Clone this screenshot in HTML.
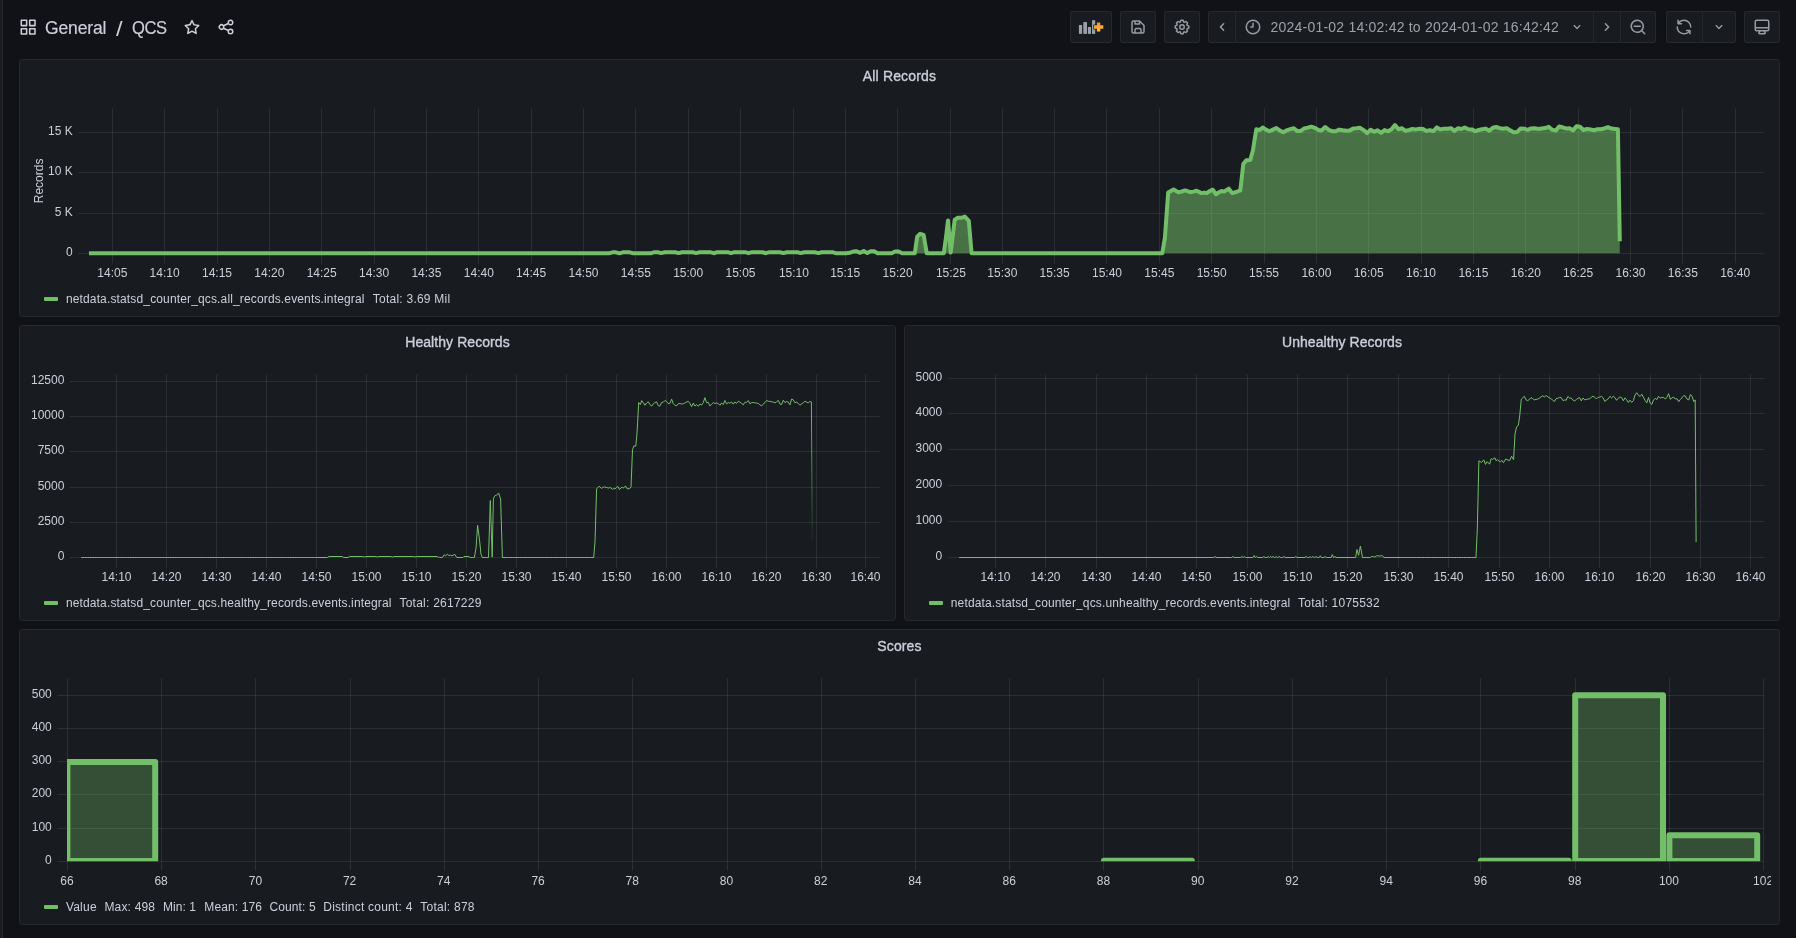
<!DOCTYPE html>
<html lang="en">
<head>
<meta charset="utf-8">
<title>QCS - Grafana</title>
<style>
*{box-sizing:border-box}
html,body{margin:0;padding:0}
body{width:1796px;height:938px;overflow:hidden;background:#111217;color:rgb(204,207,219);
 font-family:"Liberation Sans",Arial,sans-serif;font-size:14px;position:relative}
#app{position:absolute;left:0;top:0;width:1796px;height:938px;will-change:transform;transform:translateZ(0)}
.rail{position:absolute;left:0;top:0;width:3px;height:938px;background:#181b1f;border-right:1px solid #24262c}
.ic{position:absolute;display:block}
.crumb{position:absolute;left:45.2px;top:16.7px;-webkit-text-stroke:0.18px rgb(204,207,219);font-size:18px;line-height:22px;white-space:nowrap;color:rgb(204,207,219)}
.crumb span{display:inline-block}
.btn{position:absolute;top:11px;height:32px;background:#181b1f;border:1px solid #25272c;border-radius:2px}
.tr{position:absolute;left:1270.6px;top:16px;line-height:22px;font-size:14px;color:#9da1ab;white-space:nowrap}
.panel{position:absolute;background:#181b1f;border:1px solid #25272c;border-radius:3px;overflow:hidden}
.ptitle{position:absolute;left:0;right:0;top:6px;margin:0;text-align:center;font-size:14px;line-height:20px;font-weight:400;
 -webkit-text-stroke:0.35px rgb(204,207,219);color:rgb(204,207,219)}
.chart{position:absolute;left:-1px;top:-1px;display:block}
.ax{font-family:"Liberation Sans",Arial,sans-serif;font-size:12px;fill:rgb(204,207,219)}
.legend{position:absolute;left:0;height:16px;width:100%;font-size:12px;line-height:16px;white-space:nowrap;color:rgb(204,207,219)}
.li{position:absolute;top:0;display:block}
.fit{display:inline-block;white-space:nowrap}
.sw{position:absolute;top:6.5px;width:14px;height:4px;border-radius:1px;background:#73bf69}
</style>
</head>
<body>
<div id="app">
<div class="rail"></div>
<header>

<svg class="ic" style="left:18.75px;top:17.75px;width:18.3px;height:18.3px;color:rgb(204,207,219)" viewBox="0 0 24 24"><path fill="currentColor" d="M10,13H3a1,1,0,0,0-1,1v7a1,1,0,0,0,1,1h7a1,1,0,0,0,1-1V14A1,1,0,0,0,10,13ZM9,20H4V15H9ZM21,2H14a1,1,0,0,0-1,1v7a1,1,0,0,0,1,1h7a1,1,0,0,0,1-1V3A1,1,0,0,0,21,2ZM20,9H15V4h5Zm1,4H14a1,1,0,0,0-1,1v7a1,1,0,0,0,1,1h7a1,1,0,0,0,1-1V14A1,1,0,0,0,21,13Zm-1,7H15V15h5ZM10,2H3A1,1,0,0,0,2,3v7a1,1,0,0,0,1,1h7a1,1,0,0,0,1-1V3A1,1,0,0,0,10,2ZM9,9H4V4H9Z"/></svg>
<div class="crumb"><span class="fit" style="letter-spacing:-0.168px;transform:scaleX(0.975);transform-origin:0 50%;">General</span><span style="position:absolute;left:70.6px;top:1.5px;font-size:20.5px;-webkit-text-stroke:0;transform:scaleX(1.15);transform-origin:0 50%">/</span><span class="fit" style="letter-spacing:-0.469px;position:absolute;left:87.0px;top:0;transform:scaleX(0.92);transform-origin:0 50%;">QCS</span></div>
<svg class="ic" style="left:183.00px;top:18.20px;width:18px;height:18px;color:rgb(204,207,219)" viewBox="0 0 24 24"><path fill="currentColor" d="M22,9.67A1,1,0,0,0,21.14,9l-5.69-.83L12.9,3a1,1,0,0,0-1.8,0L8.55,8.16,2.86,9a1,1,0,0,0-.81.68,1,1,0,0,0,.25,1l4.13,4-1,5.68A1,1,0,0,0,6.9,21.44L12,18.77l5.1,2.67a.93.93,0,0,0,.46.12,1,1,0,0,0,.59-.19,1,1,0,0,0,.4-1l-1-5.68,4.13-4A1,1,0,0,0,22,9.67Zm-6.15,4a1,1,0,0,0-.29.88l.72,4.2-3.76-2a1.06,1.06,0,0,0-.94,0l-3.76,2,.72-4.2a1,1,0,0,0-.29-.88l-3-3,4.21-.61a1,1,0,0,0,.76-.55L12,5.7l1.88,3.82a1,1,0,0,0,.76.55l4.21.61Z"/></svg>
<svg class="ic" style="left:217.00px;top:18.20px;width:18px;height:18px;color:rgb(204,207,219)" viewBox="0 0 24 24"><path fill="currentColor" d="M18,14a4,4,0,0,0-3.08,1.48l-5.1-2.35a3.64,3.64,0,0,0,0-2.26l5.1-2.35A4,4,0,1,0,14,6a4.17,4.17,0,0,0,.07.71L8.79,9.14a4,4,0,1,0,0,5.72l5.28,2.43A4.17,4.17,0,0,0,14,18a4,4,0,1,0,4-4ZM18,4a2,2,0,1,1-2,2A2,2,0,0,1,18,4ZM6,14a2,2,0,1,1,2-2A2,2,0,0,1,6,14Zm12,6a2,2,0,1,1,2-2A2,2,0,0,1,18,20Z"/></svg>
<div class="btn" style="left:1070px;width:42px"></div>
<div class="btn" style="left:1120px;width:36px"></div>
<div class="btn" style="left:1164px;width:36px"></div>
<div class="btn" style="left:1208px;width:448px"></div>
<div class="btn" style="left:1666px;width:70px"></div>
<div class="btn" style="left:1744px;width:36px"></div>
<div style="position:absolute;left:1235px;top:12px;width:1px;height:30px;background:#25272c"></div>
<div style="position:absolute;left:1593px;top:12px;width:1px;height:30px;background:#25272c"></div>
<div style="position:absolute;left:1620px;top:12px;width:1px;height:30px;background:#25272c"></div>
<div style="position:absolute;left:1702px;top:12px;width:1px;height:30px;background:#25272c"></div>
<svg class="ic" style="left:1078px;top:18px;width:28px;height:18px" viewBox="0 0 28 18"><defs><linearGradient id="pg" x1="0" y1="0" x2="0" y2="1"><stop offset="0" stop-color="#f58b3b"/><stop offset="1" stop-color="#fbc52e"/></linearGradient></defs><rect x="0.9" y="7.0" width="3.2" height="8.9" fill="#9aa0aa"/><rect x="5.3" y="4.1" width="3.7" height="11.8" fill="#9aa0aa"/><rect x="9.9" y="9.0" width="3.1" height="6.9" fill="#9aa0aa"/><rect x="14.0" y="2.2" width="3.2" height="13.7" fill="#9aa0aa"/><path d="M18.9 4.4h3.4v2.9h3v3.4h-3v2.9h-3.4v-2.9h-3v-3.4h3z" fill="url(#pg)" stroke="#181b1f" stroke-width="1.4" paint-order="stroke" stroke-linejoin="round"/></svg>
<svg class="ic" style="left:1129.00px;top:18.00px;width:18px;height:18px;color:#969ba6" viewBox="0 0 24 24"><path fill="currentColor" d="M20.71,9.29l-6-6a1,1,0,0,0-.32-.21A1.09,1.09,0,0,0,14,3H6A3,3,0,0,0,3,6V18a3,3,0,0,0,3,3H18a3,3,0,0,0,3-3V10A1,1,0,0,0,20.71,9.29ZM9,5h4V7H9Zm6,14H9V16a1,1,0,0,1,1-1h4a1,1,0,0,1,1,1Zm4-1a1,1,0,0,1-1,1H17V16a3,3,0,0,0-3-3H10a3,3,0,0,0-3,3v3H6a1,1,0,0,1-1-1V6A1,1,0,0,1,6,5H7V8A1,1,0,0,0,8,9h6a1,1,0,0,0,1-1V6.41l4,4Z"/></svg>
<svg class="ic" style="left:1173.00px;top:18.00px;width:18px;height:18px;color:#969ba6" viewBox="0 0 24 24"><path fill="currentColor" d="M21.32,9.55l-1.89-.63.89-1.78A1,1,0,0,0,20.13,6L18,3.87a1,1,0,0,0-1.15-.19l-1.78.89-.63-1.89A1,1,0,0,0,13.5,2h-3a1,1,0,0,0-.95.68L8.92,4.57,7.14,3.68A1,1,0,0,0,6,3.87L3.87,6a1,1,0,0,0-.19,1.15l.89,1.78-1.89.63A1,1,0,0,0,2,10.5v3a1,1,0,0,0,.68.95l1.89.63-.89,1.78A1,1,0,0,0,3.87,18L6,20.13a1,1,0,0,0,1.15.19l1.78-.89.63,1.89a1,1,0,0,0,.95.68h3a1,1,0,0,0,.95-.68l.63-1.89,1.78.89A1,1,0,0,0,18,20.13L20.13,18a1,1,0,0,0,.19-1.15l-.89-1.78,1.89-.63A1,1,0,0,0,22,13.5v-3A1,1,0,0,0,21.32,9.55ZM20,12.78l-1.2.4A2,2,0,0,0,17.64,16l.57,1.14-1.1,1.1L16,17.64a2,2,0,0,0-2.79,1.16l-.4,1.2H11.22l-.4-1.2A2,2,0,0,0,8,17.64l-1.14.57-1.1-1.1L6.36,16A2,2,0,0,0,5.2,13.18L4,12.78V11.22l1.2-.4A2,2,0,0,0,6.36,8L5.79,6.89l1.1-1.1L8,6.36A2,2,0,0,0,10.82,5.2l.4-1.2h1.56l.4,1.2A2,2,0,0,0,16,6.36l1.14-.57,1.1,1.1L17.64,8a2,2,0,0,0,1.16,2.79l1.2.4ZM12,8a4,4,0,1,0,4,4A4,4,0,0,0,12,8Zm0,6a2,2,0,1,1,2-2A2,2,0,0,1,12,14Z"/></svg>
<svg class="ic" style="left:1213.30px;top:18.00px;width:18px;height:18px;color:#969ba6" viewBox="0 0 24 24"><path fill="currentColor" d="M11.29,12l3.54-3.54a1,1,0,0,0,0-1.41,1,1,0,0,0-1.42,0L9.17,11.29a1,1,0,0,0,0,1.42L13.41,17a1,1,0,0,0,.71.29,1,1,0,0,0,.71-.29,1,1,0,0,0,0-1.41Z"/></svg>
<svg class="ic" style="left:1243.90px;top:17.80px;width:18px;height:18px;color:#969ba6" viewBox="0 0 24 24"><path fill="currentColor" d="M12,2A10,10,0,1,0,22,12,10.01114,10.01114,0,0,0,12,2Zm0,18a8,8,0,1,1,8-8A8.00917,8.00917,0,0,1,12,20ZM12,6a.99974.99974,0,0,0-1,1v4H9a1,1,0,0,0,0,2h3a.99974.99974,0,0,0,1-1V7A.99974.99974,0,0,0,12,6Z"/></svg>
<div class="tr"><span class="fit" style="letter-spacing:0.213px;">2024-01-02 14:02:42 to 2024-01-02 16:42:42</span></div>
<svg class="ic" style="left:1569.00px;top:19.00px;width:16px;height:16px;color:#969ba6" viewBox="0 0 24 24"><path fill="currentColor" d="M17,9.17a1,1,0,0,0-1.41,0L12,12.71,8.46,9.17a1,1,0,0,0-1.41,0,1,1,0,0,0,0,1.42l4.24,4.24a1,1,0,0,0,1.42,0L17,10.59A1,1,0,0,0,17,9.17Z"/></svg>
<svg class="ic" style="left:1597.70px;top:18.00px;width:18px;height:18px;color:#969ba6" viewBox="0 0 24 24"><path fill="currentColor" d="M14.83,11.29,10.59,7.05a1,1,0,0,0-1.42,0,1,1,0,0,0,0,1.41L12.71,12,9.17,15.54a1,1,0,0,0,0,1.41,1,1,0,0,0,.71.29,1,1,0,0,0,.71-.29l4.24-4.24A1,1,0,0,0,14.83,11.29Z"/></svg>
<svg class="ic" style="left:1628.80px;top:18.00px;width:18px;height:18px;color:#969ba6" viewBox="0 0 24 24"><path fill="currentColor" d="M21.71,20.29,18,16.61A9,9,0,1,0,16.61,18l3.68,3.68a1,1,0,0,0,1.42,0A1,1,0,0,0,21.71,20.29ZM11,18a7,7,0,1,1,7-7A7,7,0,0,1,11,18Zm4-8H7a1,1,0,0,0,0,2h8a1,1,0,0,0,0-2Z"/></svg>
<svg class="ic" style="left:1675.00px;top:18.00px;width:18px;height:18px;color:#969ba6" viewBox="0 0 24 24"><path fill="currentColor" d="M19.91,15.51H15.38a1,1,0,0,0,0,2h2.4A8,8,0,0,1,4,12a1,1,0,0,0-2,0,10,10,0,0,0,16.88,7.23V21a1,1,0,0,0,2,0V16.5A1,1,0,0,0,19.91,15.51ZM12,2A10,10,0,0,0,5.12,4.77V3a1,1,0,0,0-2,0V7.5a1,1,0,0,0,1,1h4.5a1,1,0,0,0,0-2H6.22A8,8,0,0,1,20,12a1,1,0,0,0,2,0A10,10,0,0,0,12,2Z"/></svg>
<svg class="ic" style="left:1711.00px;top:19.00px;width:16px;height:16px;color:#969ba6" viewBox="0 0 24 24"><path fill="currentColor" d="M17,9.17a1,1,0,0,0-1.41,0L12,12.71,8.46,9.17a1,1,0,0,0-1.41,0,1,1,0,0,0,0,1.42l4.24,4.24a1,1,0,0,0,1.42,0L17,10.59A1,1,0,0,0,17,9.17Z"/></svg>
<svg class="ic" style="left:1752.80px;top:18.00px;width:18px;height:18px;color:#969ba6" viewBox="0 0 24 24"><path fill="currentColor" d="M19,2H5A3,3,0,0,0,2,5V15a3,3,0,0,0,3,3H7.64l-.58,1a2,2,0,0,0,0,2,2,2,0,0,0,1.75,1h6.46A2,2,0,0,0,17,21a2,2,0,0,0,0-2l-.59-1H19a3,3,0,0,0,3-3V5A3,3,0,0,0,19,2ZM8.77,20,10,18H14l1.2,2ZM20,15a1,1,0,0,1-1,1H5a1,1,0,0,1-1-1V14H20Zm0-3H4V5A1,1,0,0,1,5,4H19a1,1,0,0,1,1,1Z"/></svg>
</header>
<main>
<section class="panel" style="left:19px;top:59px;width:1761px;height:258px"><h6 class="ptitle"><span class="fit" style="letter-spacing:0.155px;">All Records</span></h6><svg class="chart" width="1761" height="258" viewBox="0 0 1761 258">
<path d="M93.5 49.4V204.3M145.5 49.4V204.3M198.5 49.4V204.3M250.5 49.4V204.3M302.5 49.4V204.3M355.5 49.4V204.3M407.5 49.4V204.3M459.5 49.4V204.3M512.5 49.4V204.3M564.5 49.4V204.3M616.5 49.4V204.3M669.5 49.4V204.3M721.5 49.4V204.3M774.5 49.4V204.3M826.5 49.4V204.3M878.5 49.4V204.3M931.5 49.4V204.3M983.5 49.4V204.3M1035.5 49.4V204.3M1087.5 49.4V204.3M1140.5 49.4V204.3M1192.5 49.4V204.3M1245.5 49.4V204.3M1297.5 49.4V204.3M1349.5 49.4V204.3M1402.5 49.4V204.3M1454.5 49.4V204.3M1506.5 49.4V204.3M1559.5 49.4V204.3M1611.5 49.4V204.3M1663.5 49.4V204.3M1716.5 49.4V204.3M59.2 194.5H1744.7M59.2 154.5H1744.7M59.2 113.5H1744.7M59.2 73.5H1744.7" stroke="rgba(240,250,255,0.09)" stroke-width="1" fill="none"/>
<clipPath id="c1"><rect x="69.5" y="49.4" width="1675.2" height="147.9"/></clipPath>
<g clip-path="url(#c1)">
<path d="M69.9,194.3 L73.4,194.3 L76.9,194.3 L80.4,194.3 L83.8,194.3 L87.3,194.3 L90.8,194.3 L94.3,194.3 L97.8,194.3 L101.3,194.3 L104.8,194.3 L108.3,194.3 L111.8,194.3 L115.3,194.3 L118.7,194.3 L122.2,194.3 L125.7,194.3 L129.2,194.3 L132.7,194.3 L136.2,194.3 L139.7,194.3 L143.2,194.3 L146.7,194.3 L150.2,194.3 L153.6,194.3 L157.1,194.3 L160.6,194.3 L164.1,194.3 L167.6,194.3 L171.1,194.3 L174.6,194.3 L178.1,194.3 L181.6,194.3 L185.1,194.3 L188.5,194.3 L192.0,194.3 L195.5,194.3 L199.0,194.3 L202.5,194.3 L206.0,194.3 L209.5,194.3 L213.0,194.3 L216.5,194.3 L220.0,194.3 L223.4,194.3 L226.9,194.3 L230.4,194.3 L233.9,194.3 L237.4,194.3 L240.9,194.3 L244.4,194.3 L247.9,194.3 L251.4,194.3 L254.9,194.3 L258.3,194.3 L261.8,194.3 L265.3,194.3 L268.8,194.3 L272.3,194.3 L275.8,194.3 L279.3,194.3 L282.8,194.3 L286.3,194.3 L289.8,194.3 L293.2,194.3 L296.7,194.3 L300.2,194.3 L303.7,194.3 L307.2,194.3 L310.7,194.3 L314.2,194.3 L317.7,194.3 L321.2,194.3 L324.7,194.3 L328.1,194.3 L331.6,194.3 L335.1,194.3 L338.6,194.3 L342.1,194.3 L345.6,194.3 L349.1,194.3 L352.6,194.3 L356.1,194.3 L359.6,194.3 L363.0,194.3 L366.5,194.3 L370.0,194.3 L373.5,194.3 L377.0,194.3 L380.5,194.3 L384.0,194.3 L387.5,194.3 L391.0,194.3 L394.5,194.3 L397.9,194.3 L401.4,194.3 L404.9,194.3 L408.4,194.3 L411.9,194.3 L415.4,194.3 L418.9,194.3 L422.4,194.3 L425.9,194.3 L429.4,194.3 L432.8,194.3 L436.3,194.3 L439.8,194.3 L443.3,194.3 L446.8,194.3 L450.3,194.3 L453.8,194.3 L457.3,194.3 L460.8,194.3 L464.3,194.3 L467.7,194.3 L471.2,194.3 L474.7,194.3 L478.2,194.3 L481.7,194.3 L485.2,194.3 L488.7,194.3 L492.2,194.3 L495.7,194.3 L499.2,194.3 L502.6,194.3 L506.1,194.3 L509.6,194.3 L513.1,194.3 L516.6,194.3 L520.1,194.3 L523.6,194.3 L527.1,194.3 L530.6,194.3 L534.1,194.3 L537.5,194.3 L541.0,194.3 L544.5,194.3 L548.0,194.3 L551.5,194.3 L555.0,194.3 L558.5,194.3 L562.0,194.3 L565.5,194.3 L569.0,194.3 L572.4,194.3 L575.9,194.3 L579.4,194.3 L582.9,194.3 L586.4,194.3 L589.9,194.3 L593.4,193.3 L596.9,193.3 L600.4,194.3 L603.9,193.3 L607.3,193.3 L610.8,193.3 L614.3,194.3 L617.8,194.3 L621.3,194.3 L624.8,194.3 L628.3,194.3 L631.8,194.3 L635.3,193.2 L638.8,193.3 L642.2,194.1 L645.7,193.3 L649.2,193.3 L652.7,193.2 L656.2,193.3 L659.7,194.1 L663.2,193.3 L666.7,193.2 L670.2,193.3 L673.7,193.3 L677.1,194.1 L680.6,193.3 L684.1,193.2 L687.6,193.3 L691.1,193.2 L694.6,194.2 L698.1,193.3 L701.6,193.2 L705.1,193.3 L708.6,193.2 L712.0,194.2 L715.5,193.2 L719.0,193.3 L722.5,193.3 L726.0,193.2 L729.5,194.2 L733.0,193.2 L736.5,193.3 L740.0,193.2 L743.5,193.3 L746.9,194.2 L750.4,193.2 L753.9,193.3 L757.4,193.2 L760.9,193.3 L764.4,194.1 L767.9,193.3 L771.4,193.3 L774.9,193.2 L778.4,193.3 L781.8,194.1 L785.3,193.3 L788.8,193.2 L792.3,193.3 L795.8,193.3 L799.3,194.1 L802.8,193.3 L806.3,193.2 L809.8,193.3 L813.3,193.2 L816.7,194.2 L820.2,194.3 L823.7,194.3 L827.2,194.3 L830.7,193.8 L834.2,192.5 L837.7,192.3 L841.2,193.8 L844.7,192.1 L848.2,194.0 L851.6,192.2 L855.1,192.3 L858.6,194.3 L862.1,194.3 L865.6,194.3 L869.1,194.3 L872.6,194.3 L876.1,192.5 L879.6,192.5 L883.1,194.3 L886.5,194.3 L890.0,194.3 L895.8,194.3 L898.2,177.6 L901.2,174.8 L904.6,175.9 L907.8,194.3 L911.7,194.3 L915.2,194.3 L918.7,194.3 L924.8,194.3 L926.9,179.0 L929.0,161.4 L931.7,193.6 L935.7,160.8 L938.9,158.8 L942.4,158.8 L945.8,157.6 L949.8,161.8 L952.6,194.3 L956.2,194.3 L959.7,194.3 L963.2,194.3 L966.7,194.3 L970.1,194.3 L973.6,194.3 L977.1,194.3 L980.6,194.3 L984.1,194.3 L987.6,194.3 L991.1,194.3 L994.6,194.3 L998.1,194.3 L1001.6,194.3 L1005.0,194.3 L1008.5,194.3 L1012.0,194.3 L1015.5,194.3 L1019.0,194.3 L1022.5,194.3 L1026.0,194.3 L1029.5,194.3 L1033.0,194.3 L1036.5,194.3 L1039.9,194.3 L1043.4,194.3 L1046.9,194.3 L1050.4,194.3 L1053.9,194.3 L1057.4,194.3 L1060.9,194.3 L1064.4,194.3 L1067.9,194.3 L1071.4,194.3 L1074.8,194.3 L1078.3,194.3 L1081.8,194.3 L1085.3,194.3 L1088.8,194.3 L1092.3,194.3 L1095.8,194.3 L1099.3,194.3 L1102.8,194.3 L1106.3,194.3 L1109.7,194.3 L1113.2,194.3 L1116.7,194.3 L1120.2,194.3 L1123.7,194.3 L1127.2,194.3 L1130.7,194.3 L1134.2,194.3 L1137.7,194.3 L1143.2,194.3 L1145.9,178.9 L1149.2,133.4 L1154.6,130.4 L1159.4,133.4 L1162.8,132.5 L1166.1,131.4 L1171.3,133.2 L1174.5,132.6 L1177.6,131.7 L1182.5,134.1 L1185.2,133.6 L1187.7,134.1 L1190.8,132.0 L1193.7,130.7 L1197.0,135.2 L1200.0,133.3 L1202.6,131.9 L1204.9,132.6 L1209.8,129.7 L1213.1,134.1 L1217.2,133.0 L1221.3,131.4 L1224.3,105.0 L1227.3,101.3 L1231.3,101.0 L1234.0,90.9 L1237.3,70.3 L1240.7,71.1 L1243.7,68.5 L1247.0,70.6 L1250.4,72.2 L1253.9,70.6 L1257.4,69.0 L1260.9,71.6 L1264.4,73.3 L1267.8,71.3 L1271.3,70.1 L1274.8,69.2 L1278.3,72.1 L1281.8,71.9 L1285.3,69.4 L1288.8,68.7 L1292.3,67.7 L1295.8,68.8 L1299.3,70.9 L1302.7,71.4 L1306.2,68.0 L1309.7,70.9 L1313.2,72.2 L1316.7,72.3 L1320.2,70.6 L1323.7,71.3 L1327.2,71.8 L1330.7,71.4 L1334.2,69.6 L1337.6,69.3 L1341.1,68.8 L1344.6,71.1 L1348.1,74.1 L1351.6,70.7 L1355.1,72.8 L1358.6,71.3 L1362.1,73.8 L1365.6,71.1 L1369.1,72.3 L1372.5,70.3 L1376.0,66.0 L1379.5,70.2 L1383.0,69.3 L1386.5,71.9 L1390.0,71.0 L1393.5,70.0 L1397.0,70.4 L1400.5,69.8 L1404.0,70.0 L1407.4,71.9 L1410.9,71.2 L1414.4,72.1 L1417.9,68.4 L1421.4,70.4 L1424.9,69.7 L1428.4,69.8 L1431.9,69.2 L1435.4,71.9 L1438.9,69.3 L1442.3,70.0 L1445.8,68.5 L1449.3,70.3 L1452.8,70.4 L1456.3,72.2 L1459.8,71.0 L1463.3,70.2 L1466.8,69.6 L1470.3,71.7 L1473.8,68.8 L1477.2,68.0 L1480.7,69.2 L1484.2,69.8 L1487.7,69.2 L1491.2,71.4 L1494.7,73.2 L1498.2,72.9 L1501.7,69.4 L1505.2,69.7 L1508.7,70.8 L1512.1,69.4 L1515.6,69.2 L1519.1,69.9 L1522.6,69.5 L1526.1,69.1 L1529.6,67.8 L1533.1,70.7 L1536.6,71.7 L1540.1,67.5 L1543.6,68.3 L1547.0,69.4 L1550.5,69.3 L1554.0,71.4 L1557.5,67.2 L1561.0,67.7 L1564.5,71.0 L1568.0,69.9 L1571.5,70.4 L1575.0,71.2 L1578.5,70.3 L1581.9,70.3 L1585.4,69.4 L1588.9,68.2 L1592.4,69.6 L1595.9,69.9 L1598.9,70.2 L1600.8,182.2 L1600.8,194.3 L69.9,194.3 Z" fill="#73bf69" fill-opacity="0.53" stroke="none"/>
<path d="M69.9,194.3 L73.4,194.3 L76.9,194.3 L80.4,194.3 L83.8,194.3 L87.3,194.3 L90.8,194.3 L94.3,194.3 L97.8,194.3 L101.3,194.3 L104.8,194.3 L108.3,194.3 L111.8,194.3 L115.3,194.3 L118.7,194.3 L122.2,194.3 L125.7,194.3 L129.2,194.3 L132.7,194.3 L136.2,194.3 L139.7,194.3 L143.2,194.3 L146.7,194.3 L150.2,194.3 L153.6,194.3 L157.1,194.3 L160.6,194.3 L164.1,194.3 L167.6,194.3 L171.1,194.3 L174.6,194.3 L178.1,194.3 L181.6,194.3 L185.1,194.3 L188.5,194.3 L192.0,194.3 L195.5,194.3 L199.0,194.3 L202.5,194.3 L206.0,194.3 L209.5,194.3 L213.0,194.3 L216.5,194.3 L220.0,194.3 L223.4,194.3 L226.9,194.3 L230.4,194.3 L233.9,194.3 L237.4,194.3 L240.9,194.3 L244.4,194.3 L247.9,194.3 L251.4,194.3 L254.9,194.3 L258.3,194.3 L261.8,194.3 L265.3,194.3 L268.8,194.3 L272.3,194.3 L275.8,194.3 L279.3,194.3 L282.8,194.3 L286.3,194.3 L289.8,194.3 L293.2,194.3 L296.7,194.3 L300.2,194.3 L303.7,194.3 L307.2,194.3 L310.7,194.3 L314.2,194.3 L317.7,194.3 L321.2,194.3 L324.7,194.3 L328.1,194.3 L331.6,194.3 L335.1,194.3 L338.6,194.3 L342.1,194.3 L345.6,194.3 L349.1,194.3 L352.6,194.3 L356.1,194.3 L359.6,194.3 L363.0,194.3 L366.5,194.3 L370.0,194.3 L373.5,194.3 L377.0,194.3 L380.5,194.3 L384.0,194.3 L387.5,194.3 L391.0,194.3 L394.5,194.3 L397.9,194.3 L401.4,194.3 L404.9,194.3 L408.4,194.3 L411.9,194.3 L415.4,194.3 L418.9,194.3 L422.4,194.3 L425.9,194.3 L429.4,194.3 L432.8,194.3 L436.3,194.3 L439.8,194.3 L443.3,194.3 L446.8,194.3 L450.3,194.3 L453.8,194.3 L457.3,194.3 L460.8,194.3 L464.3,194.3 L467.7,194.3 L471.2,194.3 L474.7,194.3 L478.2,194.3 L481.7,194.3 L485.2,194.3 L488.7,194.3 L492.2,194.3 L495.7,194.3 L499.2,194.3 L502.6,194.3 L506.1,194.3 L509.6,194.3 L513.1,194.3 L516.6,194.3 L520.1,194.3 L523.6,194.3 L527.1,194.3 L530.6,194.3 L534.1,194.3 L537.5,194.3 L541.0,194.3 L544.5,194.3 L548.0,194.3 L551.5,194.3 L555.0,194.3 L558.5,194.3 L562.0,194.3 L565.5,194.3 L569.0,194.3 L572.4,194.3 L575.9,194.3 L579.4,194.3 L582.9,194.3 L586.4,194.3 L589.9,194.3 L593.4,193.3 L596.9,193.3 L600.4,194.3 L603.9,193.3 L607.3,193.3 L610.8,193.3 L614.3,194.3 L617.8,194.3 L621.3,194.3 L624.8,194.3 L628.3,194.3 L631.8,194.3 L635.3,193.2 L638.8,193.3 L642.2,194.1 L645.7,193.3 L649.2,193.3 L652.7,193.2 L656.2,193.3 L659.7,194.1 L663.2,193.3 L666.7,193.2 L670.2,193.3 L673.7,193.3 L677.1,194.1 L680.6,193.3 L684.1,193.2 L687.6,193.3 L691.1,193.2 L694.6,194.2 L698.1,193.3 L701.6,193.2 L705.1,193.3 L708.6,193.2 L712.0,194.2 L715.5,193.2 L719.0,193.3 L722.5,193.3 L726.0,193.2 L729.5,194.2 L733.0,193.2 L736.5,193.3 L740.0,193.2 L743.5,193.3 L746.9,194.2 L750.4,193.2 L753.9,193.3 L757.4,193.2 L760.9,193.3 L764.4,194.1 L767.9,193.3 L771.4,193.3 L774.9,193.2 L778.4,193.3 L781.8,194.1 L785.3,193.3 L788.8,193.2 L792.3,193.3 L795.8,193.3 L799.3,194.1 L802.8,193.3 L806.3,193.2 L809.8,193.3 L813.3,193.2 L816.7,194.2 L820.2,194.3 L823.7,194.3 L827.2,194.3 L830.7,193.8 L834.2,192.5 L837.7,192.3 L841.2,193.8 L844.7,192.1 L848.2,194.0 L851.6,192.2 L855.1,192.3 L858.6,194.3 L862.1,194.3 L865.6,194.3 L869.1,194.3 L872.6,194.3 L876.1,192.5 L879.6,192.5 L883.1,194.3 L886.5,194.3 L890.0,194.3 L895.8,194.3 L898.2,177.6 L901.2,174.8 L904.6,175.9 L907.8,194.3 L911.7,194.3 L915.2,194.3 L918.7,194.3 L924.8,194.3 L926.9,179.0 L929.0,161.4 L931.7,193.6 L935.7,160.8 L938.9,158.8 L942.4,158.8 L945.8,157.6 L949.8,161.8 L952.6,194.3 L956.2,194.3 L959.7,194.3 L963.2,194.3 L966.7,194.3 L970.1,194.3 L973.6,194.3 L977.1,194.3 L980.6,194.3 L984.1,194.3 L987.6,194.3 L991.1,194.3 L994.6,194.3 L998.1,194.3 L1001.6,194.3 L1005.0,194.3 L1008.5,194.3 L1012.0,194.3 L1015.5,194.3 L1019.0,194.3 L1022.5,194.3 L1026.0,194.3 L1029.5,194.3 L1033.0,194.3 L1036.5,194.3 L1039.9,194.3 L1043.4,194.3 L1046.9,194.3 L1050.4,194.3 L1053.9,194.3 L1057.4,194.3 L1060.9,194.3 L1064.4,194.3 L1067.9,194.3 L1071.4,194.3 L1074.8,194.3 L1078.3,194.3 L1081.8,194.3 L1085.3,194.3 L1088.8,194.3 L1092.3,194.3 L1095.8,194.3 L1099.3,194.3 L1102.8,194.3 L1106.3,194.3 L1109.7,194.3 L1113.2,194.3 L1116.7,194.3 L1120.2,194.3 L1123.7,194.3 L1127.2,194.3 L1130.7,194.3 L1134.2,194.3 L1137.7,194.3 L1143.2,194.3 L1145.9,178.9 L1149.2,133.4 L1154.6,130.4 L1159.4,133.4 L1162.8,132.5 L1166.1,131.4 L1171.3,133.2 L1174.5,132.6 L1177.6,131.7 L1182.5,134.1 L1185.2,133.6 L1187.7,134.1 L1190.8,132.0 L1193.7,130.7 L1197.0,135.2 L1200.0,133.3 L1202.6,131.9 L1204.9,132.6 L1209.8,129.7 L1213.1,134.1 L1217.2,133.0 L1221.3,131.4 L1224.3,105.0 L1227.3,101.3 L1231.3,101.0 L1234.0,90.9 L1237.3,70.3 L1240.7,71.1 L1243.7,68.5 L1247.0,70.6 L1250.4,72.2 L1253.9,70.6 L1257.4,69.0 L1260.9,71.6 L1264.4,73.3 L1267.8,71.3 L1271.3,70.1 L1274.8,69.2 L1278.3,72.1 L1281.8,71.9 L1285.3,69.4 L1288.8,68.7 L1292.3,67.7 L1295.8,68.8 L1299.3,70.9 L1302.7,71.4 L1306.2,68.0 L1309.7,70.9 L1313.2,72.2 L1316.7,72.3 L1320.2,70.6 L1323.7,71.3 L1327.2,71.8 L1330.7,71.4 L1334.2,69.6 L1337.6,69.3 L1341.1,68.8 L1344.6,71.1 L1348.1,74.1 L1351.6,70.7 L1355.1,72.8 L1358.6,71.3 L1362.1,73.8 L1365.6,71.1 L1369.1,72.3 L1372.5,70.3 L1376.0,66.0 L1379.5,70.2 L1383.0,69.3 L1386.5,71.9 L1390.0,71.0 L1393.5,70.0 L1397.0,70.4 L1400.5,69.8 L1404.0,70.0 L1407.4,71.9 L1410.9,71.2 L1414.4,72.1 L1417.9,68.4 L1421.4,70.4 L1424.9,69.7 L1428.4,69.8 L1431.9,69.2 L1435.4,71.9 L1438.9,69.3 L1442.3,70.0 L1445.8,68.5 L1449.3,70.3 L1452.8,70.4 L1456.3,72.2 L1459.8,71.0 L1463.3,70.2 L1466.8,69.6 L1470.3,71.7 L1473.8,68.8 L1477.2,68.0 L1480.7,69.2 L1484.2,69.8 L1487.7,69.2 L1491.2,71.4 L1494.7,73.2 L1498.2,72.9 L1501.7,69.4 L1505.2,69.7 L1508.7,70.8 L1512.1,69.4 L1515.6,69.2 L1519.1,69.9 L1522.6,69.5 L1526.1,69.1 L1529.6,67.8 L1533.1,70.7 L1536.6,71.7 L1540.1,67.5 L1543.6,68.3 L1547.0,69.4 L1550.5,69.3 L1554.0,71.4 L1557.5,67.2 L1561.0,67.7 L1564.5,71.0 L1568.0,69.9 L1571.5,70.4 L1575.0,71.2 L1578.5,70.3 L1581.9,70.3 L1585.4,69.4 L1588.9,68.2 L1592.4,69.6 L1595.9,69.9 L1598.9,70.2 L1600.8,182.2" fill="none" stroke="#73bf69" stroke-width="4" stroke-linejoin="round" stroke-linecap="butt"/>
</g>
<text class="ax" x="93.3" y="217.7" text-anchor="middle">14:05</text>
<text class="ax" x="145.6" y="217.7" text-anchor="middle">14:10</text>
<text class="ax" x="198.0" y="217.7" text-anchor="middle">14:15</text>
<text class="ax" x="250.3" y="217.7" text-anchor="middle">14:20</text>
<text class="ax" x="302.7" y="217.7" text-anchor="middle">14:25</text>
<text class="ax" x="355.1" y="217.7" text-anchor="middle">14:30</text>
<text class="ax" x="407.4" y="217.7" text-anchor="middle">14:35</text>
<text class="ax" x="459.8" y="217.7" text-anchor="middle">14:40</text>
<text class="ax" x="512.1" y="217.7" text-anchor="middle">14:45</text>
<text class="ax" x="564.5" y="217.7" text-anchor="middle">14:50</text>
<text class="ax" x="616.8" y="217.7" text-anchor="middle">14:55</text>
<text class="ax" x="669.2" y="217.7" text-anchor="middle">15:00</text>
<text class="ax" x="721.5" y="217.7" text-anchor="middle">15:05</text>
<text class="ax" x="774.9" y="217.7" text-anchor="middle">15:10</text>
<text class="ax" x="826.2" y="217.7" text-anchor="middle">15:15</text>
<text class="ax" x="878.6" y="217.7" text-anchor="middle">15:20</text>
<text class="ax" x="931.9" y="217.7" text-anchor="middle">15:25</text>
<text class="ax" x="983.3" y="217.7" text-anchor="middle">15:30</text>
<text class="ax" x="1035.6" y="217.7" text-anchor="middle">15:35</text>
<text class="ax" x="1088.0" y="217.7" text-anchor="middle">15:40</text>
<text class="ax" x="1140.3" y="217.7" text-anchor="middle">15:45</text>
<text class="ax" x="1192.7" y="217.7" text-anchor="middle">15:50</text>
<text class="ax" x="1245.0" y="217.7" text-anchor="middle">15:55</text>
<text class="ax" x="1297.4" y="217.7" text-anchor="middle">16:00</text>
<text class="ax" x="1349.7" y="217.7" text-anchor="middle">16:05</text>
<text class="ax" x="1402.0" y="217.7" text-anchor="middle">16:10</text>
<text class="ax" x="1454.4" y="217.7" text-anchor="middle">16:15</text>
<text class="ax" x="1506.8" y="217.7" text-anchor="middle">16:20</text>
<text class="ax" x="1559.1" y="217.7" text-anchor="middle">16:25</text>
<text class="ax" x="1611.5" y="217.7" text-anchor="middle">16:30</text>
<text class="ax" x="1663.8" y="217.7" text-anchor="middle">16:35</text>
<text class="ax" x="1716.2" y="217.7" text-anchor="middle">16:40</text>
<text class="ax" x="53.8" y="197.0" text-anchor="end">0</text>
<text class="ax" x="53.8" y="157.0" text-anchor="end">5 K</text>
<text class="ax" x="53.8" y="116.0" text-anchor="end">10 K</text>
<text class="ax" x="53.8" y="76.0" text-anchor="end">15 K</text>
<text class="ax" transform="translate(24.4 121.9) rotate(-90)" text-anchor="middle">Records</text>
</svg><div class="legend" style="top:230.5px"><span class="sw" style="left:24.0px"></span><span class="li" style="left:45.9px"><span class="fit" style="letter-spacing:0.145px;">netdata.statsd_counter_qcs.all_records.events.integral</span></span><span class="li" style="left:352.8px"><span class="fit" style="letter-spacing:0.237px;">Total: 3.69 Mil</span></span></div></section>
<section class="panel" style="left:19px;top:325px;width:877px;height:296px"><h6 class="ptitle"><span class="fit" style="letter-spacing:0.073px;">Healthy Records</span></h6><svg class="chart" width="877" height="296" viewBox="0 0 877 296">
<path d="M97.5 49.8V242.5M147.5 49.8V242.5M197.5 49.8V242.5M247.5 49.8V242.5M297.5 49.8V242.5M347.5 49.8V242.5M397.5 49.8V242.5M447.5 49.8V242.5M497.5 49.8V242.5M547.5 49.8V242.5M597.5 49.8V242.5M647.5 49.8V242.5M697.5 49.8V242.5M747.5 49.8V242.5M797.5 49.8V242.5M846.5 49.8V242.5M50.7 232.5H860.6M50.7 197.5H860.6M50.7 162.5H860.6M50.7 126.5H860.6M50.7 91.5H860.6M50.7 56.5H860.6" stroke="rgba(240,250,255,0.09)" stroke-width="1" fill="none"/>
<clipPath id="c2"><rect x="61.0" y="49.8" width="799.6" height="184.7"/></clipPath>
<g clip-path="url(#c2)">
<linearGradient id="fd2" gradientUnits="userSpaceOnUse" x1="0" y1="77.1" x2="0" y2="217.4"><stop offset="0" stop-color="#73bf69"/><stop offset="0.35" stop-color="#73bf69" stop-opacity="0.75"/><stop offset="1" stop-color="#73bf69" stop-opacity="0.05"/></linearGradient>
<path d="M792.4,77.1 L793.3,217.4" fill="none" stroke="url(#fd2)" stroke-width="1"/>
<path d="M62.2,232.5 L63.8,232.5 L65.5,232.5 L67.2,232.5 L68.8,232.5 L70.5,232.5 L72.2,232.5 L73.8,232.5 L75.5,232.5 L77.2,232.5 L78.8,232.5 L80.5,232.5 L82.2,232.5 L83.8,232.5 L85.5,232.5 L87.2,232.5 L88.8,232.5 L90.5,232.5 L92.2,232.5 L93.8,232.5 L95.5,232.5 L97.2,232.5 L98.8,232.5 L100.5,232.5 L102.2,232.5 L103.8,232.5 L105.5,232.5 L107.2,232.5 L108.8,232.5 L110.5,232.5 L112.2,232.5 L113.8,232.5 L115.5,232.5 L117.2,232.5 L118.8,232.5 L120.5,232.5 L122.2,232.5 L123.8,232.5 L125.5,232.5 L127.2,232.5 L128.8,232.5 L130.5,232.5 L132.2,232.5 L133.8,232.5 L135.5,232.5 L137.2,232.5 L138.8,232.5 L140.5,232.5 L142.2,232.5 L143.8,232.5 L145.5,232.5 L147.2,232.5 L148.8,232.5 L150.5,232.5 L152.2,232.5 L153.8,232.5 L155.5,232.5 L157.2,232.5 L158.8,232.5 L160.5,232.5 L162.2,232.5 L163.8,232.5 L165.5,232.5 L167.2,232.5 L168.8,232.5 L170.5,232.5 L172.2,232.5 L173.8,232.5 L175.5,232.5 L177.2,232.5 L178.8,232.5 L180.5,232.5 L182.2,232.5 L183.8,232.5 L185.5,232.5 L187.2,232.5 L188.8,232.5 L190.5,232.5 L192.2,232.5 L193.8,232.5 L195.5,232.5 L197.2,232.5 L198.8,232.5 L200.5,232.5 L202.2,232.5 L203.8,232.5 L205.5,232.5 L207.2,232.5 L208.8,232.5 L210.5,232.5 L212.2,232.5 L213.8,232.5 L215.5,232.5 L217.2,232.5 L218.8,232.5 L220.5,232.5 L222.2,232.5 L223.8,232.5 L225.5,232.5 L227.2,232.5 L228.8,232.5 L230.5,232.5 L232.2,232.5 L233.8,232.5 L235.5,232.5 L237.2,232.5 L238.8,232.5 L240.5,232.5 L242.2,232.5 L243.8,232.5 L245.5,232.5 L247.2,232.5 L248.8,232.5 L250.5,232.5 L252.2,232.5 L253.8,232.5 L255.5,232.5 L257.2,232.5 L258.8,232.5 L260.5,232.5 L262.2,232.5 L263.8,232.5 L265.5,232.5 L267.2,232.5 L268.8,232.5 L270.5,232.5 L272.2,232.5 L273.8,232.5 L275.5,232.5 L277.2,232.5 L278.8,232.5 L280.5,232.5 L282.2,232.5 L283.8,232.5 L285.5,232.5 L287.2,232.5 L288.8,232.5 L290.5,232.5 L292.2,232.5 L293.8,232.5 L295.5,232.5 L297.2,232.5 L298.8,232.5 L301.0,232.5 L308.4,232.5 L310.1,231.5 L323.1,231.5 L324.8,232.5 L328.9,232.5 L330.6,231.5 L343.8,231.5 L345.3,232.0 L346.8,231.5 L356.9,231.5 L358.4,232.0 L359.9,231.5 L371.9,231.5 L373.4,232.0 L374.9,231.5 L394.3,231.5 L395.8,232.0 L397.3,231.5 L418.3,231.5 L419.6,232.5 L420.3,232.1 L421.0,232.5 L423.3,232.5 L425.3,229.7 L426.4,231.0 L428.3,229.3 L430.0,230.5 L431.5,230.2 L433.0,230.8 L435.7,229.3 L437.8,232.5 L444.0,232.5 L444.9,231.5 L449.9,231.5 L451.2,232.5 L453.6,232.5 L455.3,232.5 L457.0,223.5 L458.6,200.3 L460.3,212.8 L462.0,229.3 L463.4,232.5 L467.8,232.5 L469.5,232.5 L471.3,175.5 L473.2,232.1 L474.4,173.4 L475.9,170.7 L477.7,170.2 L479.6,168.0 L481.6,173.9 L483.4,232.5 L485.0,232.5 L487.1,232.5 L488.8,232.5 L490.4,232.5 L492.1,232.5 L493.8,232.5 L495.4,232.5 L497.1,232.5 L498.8,232.5 L500.4,232.5 L502.1,232.5 L503.8,232.5 L505.4,232.5 L507.1,232.5 L508.8,232.5 L510.4,232.5 L512.1,232.5 L513.8,232.5 L515.4,232.5 L517.1,232.5 L518.8,232.5 L520.4,232.5 L522.1,232.5 L523.8,232.5 L525.4,232.5 L527.1,232.5 L528.8,232.5 L530.4,232.5 L532.1,232.5 L533.8,232.5 L535.4,232.5 L537.1,232.5 L538.8,232.5 L540.4,232.5 L542.1,232.5 L543.8,232.5 L545.4,232.5 L547.1,232.5 L548.8,232.5 L550.4,232.5 L552.1,232.5 L553.8,232.5 L555.4,232.5 L557.1,232.5 L558.8,232.5 L560.4,232.5 L562.1,232.5 L563.8,232.5 L565.4,232.5 L567.1,232.5 L568.8,232.5 L570.4,232.5 L572.1,232.5 L574.7,232.5 L576.0,216.8 L577.6,163.9 L580.2,161.1 L582.5,163.5 L584.1,162.2 L585.7,161.9 L588.2,162.7 L589.7,163.1 L591.2,162.4 L593.5,164.3 L594.8,163.5 L596.0,164.0 L597.5,162.4 L598.9,161.4 L600.4,164.6 L601.9,163.0 L603.1,162.3 L604.2,163.1 L606.5,161.0 L608.1,163.8 L610.1,163.8 L612.0,162.2 L613.5,124.7 L614.9,120.9 L616.8,121.2 L618.1,107.0 L619.7,77.6 L621.3,79.5 L622.7,75.6 L624.3,77.8 L625.9,80.3 L627.6,78.0 L629.3,76.8 L630.9,79.6 L632.6,81.1 L634.3,78.9 L635.9,77.5 L637.6,76.8 L639.3,80.8 L640.9,81.1 L642.6,77.5 L644.3,77.2 L645.9,75.5 L647.6,76.5 L649.3,78.6 L650.9,78.5 L652.6,74.1 L654.3,78.7 L655.9,80.3 L657.6,80.8 L659.3,78.7 L660.9,78.4 L662.6,79.2 L664.3,78.7 L665.9,78.0 L667.6,77.0 L669.3,76.4 L670.9,78.4 L672.6,81.6 L674.3,78.1 L675.9,81.0 L677.6,79.6 L679.3,81.3 L680.9,79.1 L682.6,80.0 L684.3,77.6 L685.9,72.6 L687.6,77.7 L689.3,77.4 L690.9,80.9 L692.6,79.3 L694.3,77.5 L695.9,78.5 L697.6,77.9 L699.3,78.6 L700.9,80.3 L702.6,78.0 L704.3,79.5 L705.9,75.5 L707.6,78.9 L709.3,77.5 L710.9,78.2 L712.6,77.0 L714.3,79.2 L715.9,77.0 L717.6,78.3 L719.3,76.2 L720.9,77.2 L722.6,78.4 L724.3,79.8 L725.9,77.3 L727.6,77.2 L729.3,75.6 L730.9,78.8 L732.6,77.6 L734.3,77.5 L735.9,77.9 L737.6,78.1 L739.3,78.4 L740.9,79.9 L742.6,80.7 L744.3,79.4 L745.9,77.3 L747.6,75.5 L749.3,76.3 L750.9,76.3 L752.6,76.8 L754.3,77.1 L755.9,77.9 L757.6,76.8 L759.3,75.3 L760.9,79.0 L762.6,79.5 L764.3,75.2 L765.9,77.5 L767.6,76.6 L769.3,77.1 L770.9,79.9 L772.6,74.1 L774.3,74.8 L775.9,77.7 L777.6,77.2 L779.3,78.4 L780.9,80.2 L782.6,78.9 L784.3,77.7 L785.9,76.3 L787.6,77.1 L789.3,78.0 L790.9,76.3 L792.4,77.1" fill="none" stroke="#73bf69" stroke-width="1" stroke-linejoin="round" stroke-linecap="butt"/>
</g>
<text class="ax" x="97.5" y="255.8" text-anchor="middle">14:10</text>
<text class="ax" x="147.5" y="255.8" text-anchor="middle">14:20</text>
<text class="ax" x="197.5" y="255.8" text-anchor="middle">14:30</text>
<text class="ax" x="247.5" y="255.8" text-anchor="middle">14:40</text>
<text class="ax" x="297.5" y="255.8" text-anchor="middle">14:50</text>
<text class="ax" x="347.5" y="255.8" text-anchor="middle">15:00</text>
<text class="ax" x="397.5" y="255.8" text-anchor="middle">15:10</text>
<text class="ax" x="447.5" y="255.8" text-anchor="middle">15:20</text>
<text class="ax" x="497.5" y="255.8" text-anchor="middle">15:30</text>
<text class="ax" x="547.5" y="255.8" text-anchor="middle">15:40</text>
<text class="ax" x="597.5" y="255.8" text-anchor="middle">15:50</text>
<text class="ax" x="647.5" y="255.8" text-anchor="middle">16:00</text>
<text class="ax" x="697.5" y="255.8" text-anchor="middle">16:10</text>
<text class="ax" x="747.5" y="255.8" text-anchor="middle">16:20</text>
<text class="ax" x="797.5" y="255.8" text-anchor="middle">16:30</text>
<text class="ax" x="846.5" y="255.8" text-anchor="middle">16:40</text>
<text class="ax" x="45.4" y="235.0" text-anchor="end">0</text>
<text class="ax" x="45.4" y="200.0" text-anchor="end">2500</text>
<text class="ax" x="45.4" y="165.0" text-anchor="end">5000</text>
<text class="ax" x="45.4" y="129.0" text-anchor="end">7500</text>
<text class="ax" x="45.4" y="94.0" text-anchor="end">10000</text>
<text class="ax" x="45.4" y="59.0" text-anchor="end">12500</text>
</svg><div class="legend" style="top:268.5px"><span class="sw" style="left:24.0px"></span><span class="li" style="left:45.9px"><span class="fit" style="letter-spacing:0.141px;">netdata.statsd_counter_qcs.healthy_records.events.integral</span></span><span class="li" style="left:379.4px"><span class="fit" style="letter-spacing:0.247px;">Total: 2617229</span></span></div></section>
<section class="panel" style="left:904px;top:325px;width:876px;height:296px"><h6 class="ptitle"><span class="fit" style="letter-spacing:0.055px;">Unhealthy Records</span></h6><svg class="chart" width="876" height="296" viewBox="0 0 876 296">
<path d="M91.5 49.8V242.5M141.5 49.8V242.5M192.5 49.8V242.5M242.5 49.8V242.5M292.5 49.8V242.5M343.5 49.8V242.5M393.5 49.8V242.5M443.5 49.8V242.5M494.5 49.8V242.5M544.5 49.8V242.5M595.5 49.8V242.5M645.5 49.8V242.5M695.5 49.8V242.5M746.5 49.8V242.5M796.5 49.8V242.5M846.5 49.8V242.5M44.3 232.5H860.6M44.3 196.5H860.6M44.3 160.5H860.6M44.3 124.5H860.6M44.3 88.5H860.6M44.3 53.5H860.6" stroke="rgba(240,250,255,0.09)" stroke-width="1" fill="none"/>
<clipPath id="c3"><rect x="54.6" y="49.8" width="806.0" height="184.7"/></clipPath>
<g clip-path="url(#c3)">
<path d="M55.2,232.5 L309.7,232.5 L310.9,231.4 L312.1,232.5 L327.7,232.5 L328.9,231.4 L330.1,232.5 L336.7,232.5 L337.9,231.4 L339.1,232.5 L340.3,231.5 L341.5,232.5 L348.9,232.5 L350.1,230.5 L351.3,232.5 L351.4,232.5 L352.6,231.5 L353.8,232.5 L358.7,232.5 L359.9,231.5 L361.1,232.5 L363.0,232.5 L364.2,231.5 L365.4,232.5 L366.6,231.4 L367.8,232.5 L367.9,232.5 L369.1,231.4 L370.3,232.5 L371.0,232.5 L372.2,231.5 L373.4,232.5 L374.0,232.5 L375.2,231.4 L376.4,232.5 L378.7,232.5 L379.9,231.4 L381.1,232.5 L390.6,232.5 L391.8,231.4 L393.0,232.5 L401.0,232.5 L402.2,231.4 L403.4,232.5 L404.9,232.5 L406.1,231.5 L407.3,232.5 L407.7,232.5 L408.9,231.4 L410.1,232.5 L410.8,232.5 L412.0,231.4 L413.2,232.5 L415.1,232.5 L416.3,230.7 L417.5,232.5 L419.9,232.5 L421.1,231.4 L422.3,232.5 L427.1,232.5 L428.3,229.6 L429.5,232.5 L429.8,232.5 L431.0,231.4 L432.2,232.5 L451.6,232.5 L453.0,224.5 L454.6,230.4 L456.4,221.1 L458.5,232.5 L466.4,232.5 L467.7,231.4 L469.5,231.6 L470.8,232.1 L472.3,230.9 L474.0,230.7 L475.5,231.1 L477.2,230.7 L478.7,230.9 L479.8,232.5 L496.0,232.5 L497.2,232.5 L498.9,232.5 L500.6,232.5 L502.2,232.5 L503.9,232.5 L505.6,232.5 L507.3,232.5 L509.0,232.5 L510.6,232.5 L512.3,232.5 L514.0,232.5 L515.7,232.5 L517.3,232.5 L519.0,232.5 L520.7,232.5 L522.4,232.5 L524.1,232.5 L525.7,232.5 L527.4,232.5 L529.1,232.5 L530.8,232.5 L532.5,232.5 L534.1,232.5 L535.8,232.5 L537.5,232.5 L539.2,232.5 L540.8,232.5 L542.5,232.5 L544.2,232.5 L545.9,232.5 L547.6,232.5 L549.2,232.5 L550.9,232.5 L552.6,232.5 L554.3,232.5 L556.0,232.5 L557.6,232.5 L559.3,232.5 L561.0,232.5 L562.7,232.5 L564.3,232.5 L566.0,232.5 L567.7,232.5 L569.4,232.5 L572.0,232.5 L573.3,203.8 L574.9,135.8 L577.5,137.5 L579.8,134.8 L581.5,139.4 L583.1,136.6 L585.6,139.2 L587.1,133.7 L588.6,134.3 L590.9,132.8 L592.2,135.8 L593.4,134.7 L594.9,135.9 L596.3,136.7 L597.9,135.4 L599.4,137.7 L600.6,136.0 L601.7,134.0 L604.1,135.1 L605.7,135.5 L607.6,131.2 L609.6,134.8 L611.0,108.9 L612.5,102.1 L614.4,100.0 L615.7,91.0 L617.3,74.2 L618.9,72.7 L620.4,71.3 L622.0,74.9 L623.6,75.6 L625.3,74.5 L627.0,72.6 L628.6,73.6 L630.3,74.9 L632.0,74.4 L633.7,74.1 L635.4,73.2 L637.0,71.9 L638.7,70.8 L640.4,72.0 L642.1,70.6 L643.8,71.8 L645.4,72.8 L647.1,73.7 L648.8,75.4 L650.5,76.4 L652.1,73.6 L653.8,73.3 L655.5,72.4 L657.2,72.6 L658.9,75.6 L660.5,75.0 L662.2,75.2 L663.9,71.4 L665.6,73.0 L667.3,73.1 L668.9,75.1 L670.6,75.9 L672.3,74.6 L674.0,73.3 L675.6,72.6 L677.3,75.9 L679.0,73.0 L680.7,74.8 L682.4,74.4 L684.0,74.0 L685.7,73.9 L687.4,72.1 L689.1,71.2 L690.8,72.4 L692.4,74.0 L694.1,72.3 L695.8,72.1 L697.5,71.3 L699.1,72.8 L700.8,76.4 L702.5,75.1 L704.2,73.8 L705.9,71.4 L707.5,72.9 L709.2,71.3 L710.9,72.6 L712.6,75.3 L714.3,73.2 L715.9,71.9 L717.6,72.5 L719.3,75.8 L721.0,72.8 L722.6,74.7 L724.3,77.5 L726.0,75.2 L727.7,77.4 L729.4,75.7 L731.0,70.0 L732.7,67.7 L734.4,70.3 L736.1,71.5 L737.8,69.2 L739.4,72.2 L741.1,75.5 L742.8,77.9 L744.5,72.5 L746.2,78.0 L747.8,79.4 L749.5,75.1 L751.2,73.3 L752.9,74.5 L754.5,71.3 L756.2,73.0 L757.9,72.6 L759.6,72.3 L761.3,74.1 L762.9,72.2 L764.6,68.7 L766.3,74.3 L768.0,72.9 L769.7,72.1 L771.3,74.0 L773.0,73.7 L774.7,76.6 L776.4,74.3 L778.0,72.8 L779.7,70.6 L781.4,71.1 L783.1,74.2 L784.8,74.9 L786.4,69.5 L788.1,71.3 L789.8,76.7 L791.2,74.9 L792.1,217.1" fill="none" stroke="#73bf69" stroke-width="1" stroke-linejoin="round" stroke-linecap="butt"/>
</g>
<text class="ax" x="91.5" y="255.8" text-anchor="middle">14:10</text>
<text class="ax" x="141.5" y="255.8" text-anchor="middle">14:20</text>
<text class="ax" x="192.5" y="255.8" text-anchor="middle">14:30</text>
<text class="ax" x="242.5" y="255.8" text-anchor="middle">14:40</text>
<text class="ax" x="292.5" y="255.8" text-anchor="middle">14:50</text>
<text class="ax" x="343.5" y="255.8" text-anchor="middle">15:00</text>
<text class="ax" x="393.5" y="255.8" text-anchor="middle">15:10</text>
<text class="ax" x="443.5" y="255.8" text-anchor="middle">15:20</text>
<text class="ax" x="494.5" y="255.8" text-anchor="middle">15:30</text>
<text class="ax" x="544.5" y="255.8" text-anchor="middle">15:40</text>
<text class="ax" x="595.5" y="255.8" text-anchor="middle">15:50</text>
<text class="ax" x="645.5" y="255.8" text-anchor="middle">16:00</text>
<text class="ax" x="695.5" y="255.8" text-anchor="middle">16:10</text>
<text class="ax" x="746.5" y="255.8" text-anchor="middle">16:20</text>
<text class="ax" x="796.5" y="255.8" text-anchor="middle">16:30</text>
<text class="ax" x="846.5" y="255.8" text-anchor="middle">16:40</text>
<text class="ax" x="38.2" y="235.0" text-anchor="end">0</text>
<text class="ax" x="38.2" y="199.0" text-anchor="end">1000</text>
<text class="ax" x="38.2" y="163.0" text-anchor="end">2000</text>
<text class="ax" x="38.2" y="127.0" text-anchor="end">3000</text>
<text class="ax" x="38.2" y="91.0" text-anchor="end">4000</text>
<text class="ax" x="38.2" y="56.0" text-anchor="end">5000</text>
</svg><div class="legend" style="top:268.5px"><span class="sw" style="left:24.2px"></span><span class="li" style="left:45.8px"><span class="fit" style="letter-spacing:0.143px;">netdata.statsd_counter_qcs.unhealthy_records.events.integral</span></span><span class="li" style="left:393.0px"><span class="fit" style="letter-spacing:0.226px;">Total: 1075532</span></span></div></section>
<section class="panel" style="left:19px;top:629px;width:1761px;height:296px"><h6 class="ptitle"><span class="fit" style="letter-spacing:0.120px;">Scores</span></h6><svg class="chart" width="1752" height="296" viewBox="0 0 1752 296">
<path d="M48.5 49.5V242.0M142.5 49.5V242.0M236.5 49.5V242.0M331.5 49.5V242.0M425.5 49.5V242.0M519.5 49.5V242.0M613.5 49.5V242.0M708.5 49.5V242.0M802.5 49.5V242.0M896.5 49.5V242.0M990.5 49.5V242.0M1084.5 49.5V242.0M1179.5 49.5V242.0M1273.5 49.5V242.0M1367.5 49.5V242.0M1461.5 49.5V242.0M1556.5 49.5V242.0M1650.5 49.5V242.0M1744.5 49.5V242.0M38.2 232.5H1744.6M38.2 199.5H1744.6M38.2 165.5H1744.6M38.2 132.5H1744.6M38.2 99.5H1744.6M38.2 66.5H1744.6" stroke="rgba(240,250,255,0.09)" stroke-width="1" fill="none"/>
<clipPath id="ch"><rect x="48.0" y="44.5" width="1697.1" height="187.7"/></clipPath>
<g clip-path="url(#ch)">
<rect x="48.4" y="133.0" width="87.8" height="99.0" fill="#73bf69" fill-opacity="0.32" stroke="#73bf69" stroke-width="6" stroke-linejoin="round"/>
<rect x="1085.0" y="231.7" width="87.8" height="0.3" fill="#73bf69" fill-opacity="0.32" stroke="#73bf69" stroke-width="6" stroke-linejoin="round"/>
<rect x="1461.9" y="231.7" width="87.8" height="0.3" fill="#73bf69" fill-opacity="0.32" stroke="#73bf69" stroke-width="6" stroke-linejoin="round"/>
<rect x="1556.2" y="66.2" width="87.8" height="165.8" fill="#73bf69" fill-opacity="0.32" stroke="#73bf69" stroke-width="6" stroke-linejoin="round"/>
<rect x="1650.4" y="206.2" width="87.8" height="25.8" fill="#73bf69" fill-opacity="0.32" stroke="#73bf69" stroke-width="6" stroke-linejoin="round"/>
</g>
<text class="ax" x="47.9" y="255.8" text-anchor="middle">66</text>
<text class="ax" x="142.1" y="255.8" text-anchor="middle">68</text>
<text class="ax" x="236.4" y="255.8" text-anchor="middle">70</text>
<text class="ax" x="330.6" y="255.8" text-anchor="middle">72</text>
<text class="ax" x="424.8" y="255.8" text-anchor="middle">74</text>
<text class="ax" x="519.1" y="255.8" text-anchor="middle">76</text>
<text class="ax" x="613.3" y="255.8" text-anchor="middle">78</text>
<text class="ax" x="707.5" y="255.8" text-anchor="middle">80</text>
<text class="ax" x="801.8" y="255.8" text-anchor="middle">82</text>
<text class="ax" x="896.0" y="255.8" text-anchor="middle">84</text>
<text class="ax" x="990.2" y="255.8" text-anchor="middle">86</text>
<text class="ax" x="1084.5" y="255.8" text-anchor="middle">88</text>
<text class="ax" x="1178.7" y="255.8" text-anchor="middle">90</text>
<text class="ax" x="1273.0" y="255.8" text-anchor="middle">92</text>
<text class="ax" x="1367.2" y="255.8" text-anchor="middle">94</text>
<text class="ax" x="1461.4" y="255.8" text-anchor="middle">96</text>
<text class="ax" x="1555.7" y="255.8" text-anchor="middle">98</text>
<text class="ax" x="1649.9" y="255.8" text-anchor="middle">100</text>
<text class="ax" x="1744.1" y="255.8" text-anchor="middle">102</text>
<text class="ax" x="32.8" y="235.0" text-anchor="end">0</text>
<text class="ax" x="32.8" y="202.0" text-anchor="end">100</text>
<text class="ax" x="32.8" y="168.0" text-anchor="end">200</text>
<text class="ax" x="32.8" y="135.0" text-anchor="end">300</text>
<text class="ax" x="32.8" y="102.0" text-anchor="end">400</text>
<text class="ax" x="32.8" y="69.0" text-anchor="end">500</text>
</svg><div class="legend" style="top:268.5px"><span class="sw" style="left:24.0px"></span><span class="li" style="left:45.9px"><span class="fit" style="letter-spacing:0.217px;">Value</span></span><span class="li" style="left:84.4px"><span class="fit" style="letter-spacing:0.180px;">Max: 498</span></span><span class="li" style="left:142.9px"><span class="fit" style="letter-spacing:0.052px;">Min: 1</span></span><span class="li" style="left:184.3px"><span class="fit" style="letter-spacing:0.120px;">Mean: 176</span></span><span class="li" style="left:249.4px"><span class="fit" style="letter-spacing:0.128px;">Count: 5</span></span><span class="li" style="left:303.3px"><span class="fit" style="letter-spacing:0.231px;">Distinct count: 4</span></span><span class="li" style="left:400.3px"><span class="fit" style="letter-spacing:0.245px;">Total: 878</span></span></div></section>
</main>
</div>
</body>
</html>
